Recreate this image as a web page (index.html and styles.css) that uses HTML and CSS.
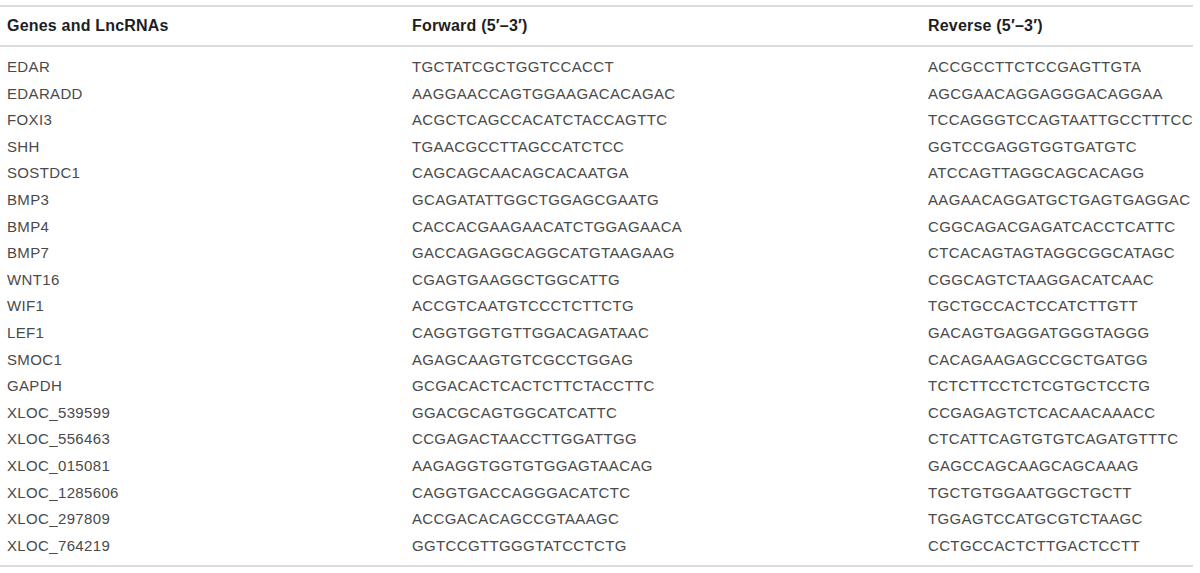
FILE: index.html
```html
<!DOCTYPE html>
<html>
<head>
<meta charset="utf-8">
<link rel="stylesheet" href="styles.css">
</head>
<body>
<table class="primers">
  <colgroup>
    <col class="c-name">
    <col class="c-fwd">
    <col class="c-rev">
  </colgroup>
  <thead>
    <tr><th>Genes and LncRNAs</th><th>Forward (5′–3′)</th><th>Reverse (5′–3′)</th></tr>
  </thead>
  <tbody>
    <tr><td>EDAR</td><td>TGCTATCGCTGGTCCACCT</td><td>ACCGCCTTCTCCGAGTTGTA</td></tr>
    <tr><td>EDARADD</td><td>AAGGAACCAGTGGAAGACACAGAC</td><td>AGCGAACAGGAGGGACAGGAA</td></tr>
    <tr><td>FOXI3</td><td>ACGCTCAGCCACATCTACCAGTTC</td><td>TCCAGGGTCCAGTAATTGCCTTTCC</td></tr>
    <tr><td>SHH</td><td>TGAACGCCTTAGCCATCTCC</td><td>GGTCCGAGGTGGTGATGTC</td></tr>
    <tr><td>SOSTDC1</td><td>CAGCAGCAACAGCACAATGA</td><td>ATCCAGTTAGGCAGCACAGG</td></tr>
    <tr><td>BMP3</td><td>GCAGATATTGGCTGGAGCGAATG</td><td>AAGAACAGGATGCTGAGTGAGGAC</td></tr>
    <tr><td>BMP4</td><td>CACCACGAAGAACATCTGGAGAACA</td><td>CGGCAGACGAGATCACCTCATTC</td></tr>
    <tr><td>BMP7</td><td>GACCAGAGGCAGGCATGTAAGAAG</td><td>CTCACAGTAGTAGGCGGCATAGC</td></tr>
    <tr><td>WNT16</td><td>CGAGTGAAGGCTGGCATTG</td><td>CGGCAGTCTAAGGACATCAAC</td></tr>
    <tr><td>WIF1</td><td>ACCGTCAATGTCCCTCTTCTG</td><td>TGCTGCCACTCCATCTTGTT</td></tr>
    <tr><td>LEF1</td><td>CAGGTGGTGTTGGACAGATAAC</td><td>GACAGTGAGGATGGGTAGGG</td></tr>
    <tr><td>SMOC1</td><td>AGAGCAAGTGTCGCCTGGAG</td><td>CACAGAAGAGCCGCTGATGG</td></tr>
    <tr><td>GAPDH</td><td>GCGACACTCACTCTTCTACCTTC</td><td>TCTCTTCCTCTCGTGCTCCTG</td></tr>
    <tr><td>XLOC_539599</td><td>GGACGCAGTGGCATCATTC</td><td>CCGAGAGTCTCACAACAAACC</td></tr>
    <tr><td>XLOC_556463</td><td>CCGAGACTAACCTTGGATTGG</td><td>CTCATTCAGTGTGTCAGATGTTTC</td></tr>
    <tr><td>XLOC_015081</td><td>AAGAGGTGGTGTGGAGTAACAG</td><td>GAGCCAGCAAGCAGCAAAG</td></tr>
    <tr><td>XLOC_1285606</td><td>CAGGTGACCAGGGACATCTC</td><td>TGCTGTGGAATGGCTGCTT</td></tr>
    <tr><td>XLOC_297809</td><td>ACCGACACAGCCGTAAAGC</td><td>TGGAGTCCATGCGTCTAAGC</td></tr>
    <tr><td>XLOC_764219</td><td>GGTCCGTTGGGTATCCTCTG</td><td>CCTGCCACTCTTGACTCCTT</td></tr>
  </tbody>
</table>
</body>
</html>
```

FILE: styles.css
```css
html, body {
  margin: 0;
  padding: 0;
  background: #ffffff;
}

body {
  padding-top: 5px;
  font-family: "Liberation Sans", Arial, Helvetica, sans-serif;
}

.primers {
  width: 1193px;
  border-collapse: collapse;
  table-layout: fixed;
  border-top: 2px solid #dcdcdc;
  border-bottom: 2px solid #dcdcdc;
}

.c-name { width: 405px; }
.c-fwd { width: 516px; }
.c-rev { width: 272px; }

.primers th {
  text-align: left;
  font-weight: bold;
  font-size: 16px;
  letter-spacing: 0.2px;
  line-height: 38px;
  color: #1e1e1e;
  padding: 0 7px;
  border-bottom: 2px solid #dcdcdc;
}

.primers td {
  font-size: 15px;
  letter-spacing: 0.35px;
  line-height: 26.6px;
  color: #4a4a4a;
  padding: 0 7px;
  white-space: nowrap;
}

.primers tbody tr:first-child td {
  padding-top: 7px;
}

.primers tbody tr:last-child td {
  padding-bottom: 6px;
}
```
